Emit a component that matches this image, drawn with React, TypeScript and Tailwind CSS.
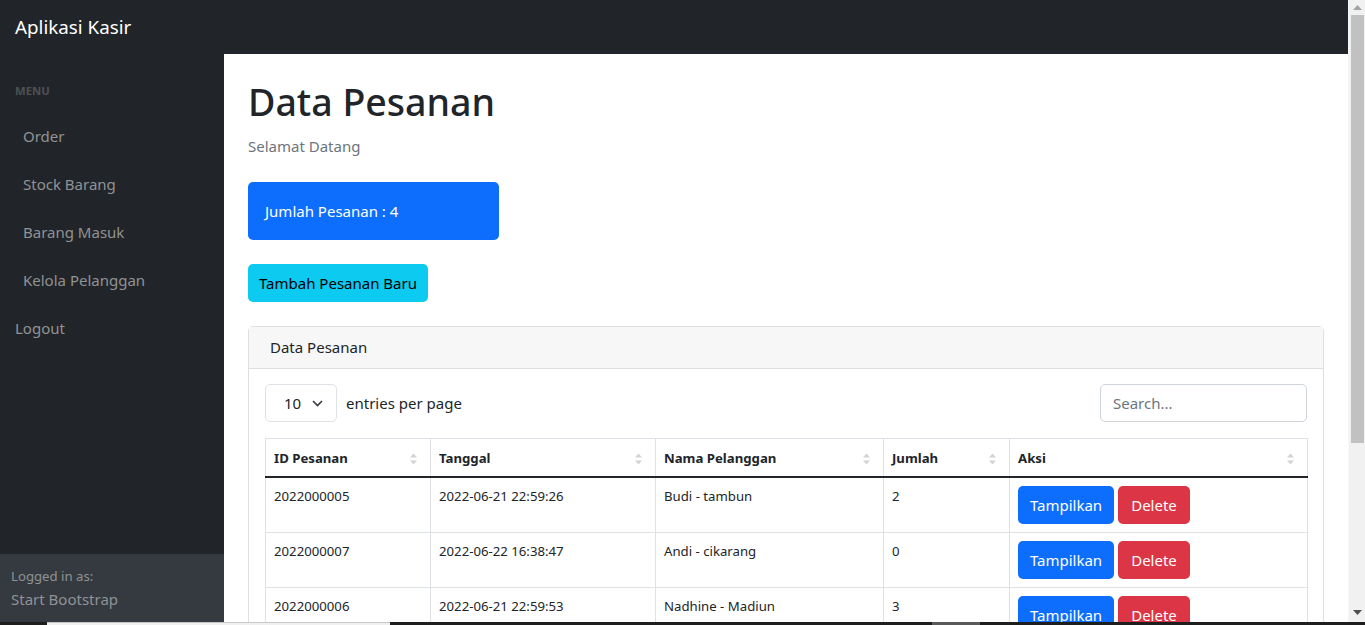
import React from "react";

const rows = [
  { id: "2022000005", tgl: "2022-06-21 22:59:26", nama: "Budi - tambun", jml: "2" },
  { id: "2022000007", tgl: "2022-06-22 16:38:47", nama: "Andi - cikarang", jml: "0" },
  { id: "2022000006", tgl: "2022-06-21 22:59:53", nama: "Nadhine - Madiun", jml: "3" },
];

function SortIcon() {
  return (
    <svg width="9" height="14" viewBox="0 0 9 14" className="shrink-0">
      <path d="M1 5.5 L4.5 1.5 L8 5.5 Z" fill="#d3d3d3" />
      <path d="M1 8.5 L4.5 12.5 L8 8.5 Z" fill="#d3d3d3" />
    </svg>
  );
}

function Th({ label, w, last }: { label: string; w: string; last?: boolean }) {
  return (
    <th
      className={`${w} ${last ? "" : "border-r"} border-[#dee2e6] pl-[8px] pr-[12px] pt-[9px] pb-[7px] text-left font-bold text-[13.2px] leading-[21px] text-[#212529]`}
    >
      <div className="flex items-center justify-between">
        <span>{label}</span>
        <SortIcon />
      </div>
    </th>
  );
}

export default function App() {
  const font = { fontFamily: "'Noto Sans', 'Open Sans', sans-serif" };
  return (
    <div className="relative flex h-[625px] w-[1365px] overflow-hidden bg-white text-[#212529]" style={font}>
      <div className="flex w-[1348px] flex-col">
        <nav className="flex h-[54px] shrink-0 items-center bg-[#212529] px-[15px]">
          <span className="text-[18.8px] leading-[30px] text-white">Aplikasi Kasir</span>
        </nav>
        <div className="flex min-h-0 flex-1">
          <aside className="flex w-[224px] shrink-0 flex-col justify-between bg-[#212529]">
            <div className="flex flex-col">
              <div className="px-[15px] pb-[12px] pt-[28px] text-[11.3px] font-bold uppercase leading-[18px] text-[#4d5154]">
                Menu
              </div>
              {["Order", "Stock Barang", "Barang Masuk", "Kelola Pelanggan"].map((t) => (
                <div key={t} className="px-[23px] py-[12px] text-[15px] leading-[24px] text-[#909295]">
                  {t}
                </div>
              ))}
              <div className="px-[15px] py-[12px] text-[15px] leading-[24px] text-[#909295]">Logout</div>
            </div>
            <div className="h-[71px] bg-[#343a40] px-[11px] pt-[12px] text-[#909295]">
              <div className="text-[13.2px] leading-[21px]">Logged in as:</div>
              <div className="text-[15px] leading-[24px]">Start Bootstrap</div>
            </div>
          </aside>
          <main className="min-w-0 flex-1 bg-white px-[24px]">
            <h1 className="mt-[24px] text-[37.5px] font-medium leading-[48px] text-[#212529]">Data Pesanan</h1>
            <div className="mt-[8px] text-[15px] leading-[24px] text-[#6c757d]">Selamat Datang</div>
            <div className="mt-[24px] flex h-[58px] w-[251px] items-center rounded-[5px] bg-[#0d6efd] px-[17px] text-[15px] text-white">
              Jumlah Pesanan : 4
            </div>
            <div className="mt-[24px] flex h-[38px] w-[180px] items-center justify-center rounded-[5px] bg-[#0dcaf0] text-[15px] text-black">
              Tambah Pesanan Baru
            </div>
            <div className="mt-[24px] w-[1076px] rounded-[5px] border border-[#dfdfdf]">
              <div className="flex h-[42px] items-center border-b border-[#dfdfdf] bg-[#f7f7f7] pl-[21px] text-[15px]">
                Data Pesanan
              </div>
              <div className="px-[16px] pt-[15px]">
                <div className="flex items-center justify-between">
                  <div className="flex items-center gap-[9px]">
                    <div className="flex h-[38px] w-[72px] items-center rounded-[5px] border border-[#dee2e6] pl-[18px] text-[15px]">
                      <span>10</span>
                      <svg width="11" height="7" viewBox="0 0 11 7" className="ml-[11px]">
                        <path d="M1 1 L5.5 5.5 L10 1" fill="none" stroke="#343a40" strokeWidth="1.6" />
                      </svg>
                    </div>
                    <span className="text-[15px]">entries per page</span>
                  </div>
                  <div className="flex h-[38px] w-[207px] items-center rounded-[5px] border border-[#ced4da] pl-[12px] text-[15px] text-[#6c757d]">
                    Search...
                  </div>
                </div>
                <table className="mt-[16px] w-[1042px] table-fixed border-collapse border border-[#dee2e6]">
                  <thead>
                    <tr className="border-b-2 border-[#212529]">
                      <Th label="ID Pesanan" w="w-[165px]" />
                      <Th label="Tanggal" w="w-[225px]" />
                      <Th label="Nama Pelanggan" w="w-[228px]" />
                      <Th label="Jumlah" w="w-[126px]" />
                      <Th label="Aksi" w="w-[298px]" last />
                    </tr>
                  </thead>
                  <tbody>
                    {rows.map((r) => (
                      <tr key={r.id} className="border-b border-[#dee2e6] align-top text-[13.2px] leading-[21px]">
                        <td className="border-r border-[#dee2e6] px-[8px] py-[8px]">{r.id}</td>
                        <td className="border-r border-[#dee2e6] px-[8px] py-[8px]">{r.tgl}</td>
                        <td className="border-r border-[#dee2e6] px-[8px] py-[8px]">{r.nama}</td>
                        <td className="border-r border-[#dee2e6] px-[8px] py-[8px]">{r.jml}</td>
                        <td className="px-[8px] py-[8px]">
                          <div className="flex gap-[4px]">
                            <div className="flex h-[38px] w-[96px] items-center justify-center rounded-[5px] bg-[#0d6efd] text-[15px] text-white">
                              Tampilkan
                            </div>
                            <div className="flex h-[38px] w-[72px] items-center justify-center rounded-[5px] bg-[#dc3545] text-[15px] text-white">
                              Delete
                            </div>
                          </div>
                        </td>
                      </tr>
                    ))}
                  </tbody>
                </table>
              </div>
            </div>
          </main>
        </div>
      </div>
      {/* browser scrollbar */}
      <div className="flex w-[17px] shrink-0 flex-col items-center border-l border-[#f7f7f7] bg-[#f1f1f1]">
        <div className="flex h-[15px] items-center justify-center">
          <svg width="9" height="5" viewBox="0 0 9 5">
            <path d="M0 5 L4.5 0 L9 5 Z" fill="#a3a3a3" />
          </svg>
        </div>
        <div className="h-[428px] w-[13px] bg-[#c1c1c1]" />
        <div className="flex-1" />
        <div className="mb-[5px] flex h-[15px] items-center justify-center">
          <svg width="9" height="5" viewBox="0 0 9 5">
            <path d="M0 0 L4.5 5 L9 0 Z" fill="#505050" />
          </svg>
        </div>
      </div>
      {/* bottom edge strip */}
      <div className="absolute bottom-0 left-0 flex h-[3px] w-full bg-[#1e1e1e]">
        <div className="ml-[47px] w-[343px] border-t border-[#c8c8c8] bg-[#f0f0f0]" />
        <div className="ml-[542px] w-[48px] bg-[#5a5a5a]" />
      </div>
    </div>
  );
}
